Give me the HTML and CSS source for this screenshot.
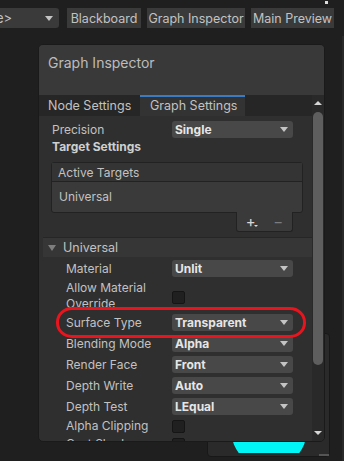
FILE: index.html
```html
<!DOCTYPE html>
<html lang="en">
<head>
    <meta charset="UTF-8">
    <title>Graph Inspector</title>
    <link rel="stylesheet" href="styles.css">
</head>
<body>

    <!-- Barre d'outils -->
    <div class="toolbar">
        <div class="tool-dropdown"><span>e&gt;</span><i class="arrow"></i></div>
        <button class="tool-btn btn-blackboard">Blackboard</button>
        <button class="tool-btn btn-inspector">Graph Inspector</button>
        <button class="tool-btn btn-preview">Main Preview</button>
        <span class="tool-dot"></span>
    </div>
    <div class="edge-line"></div>

    <!-- Fenêtre Main Preview (derrière) -->
    <div class="preview-window">
        <div class="preview-view">
            <div class="preview-sphere"></div>
        </div>
        <i class="resize-handle"></i>
    </div>

    <!-- Fenêtre Graph Inspector -->
    <div class="inspector">
        <div class="inspector-title">Graph Inspector</div>

        <div class="inspector-body">
            <div class="main">
                <div class="tabs">
                    <div class="tab">Node Settings</div>
                    <div class="tab active">Graph Settings</div>
                </div>

                <div class="content">
                    <div class="row">
                        <span class="label">Precision</span>
                        <div class="popup">Single<i class="arrow"></i></div>
                    </div>
                    <div class="section-title">Target Settings</div>

                    <div class="target-list">
                        <div class="target-header">Active Targets</div>
                        <div class="target-item">Universal</div>
                    </div>
                    <div class="target-footer">
                        <span class="plus">+<i class="mini-arrow"></i></span>
                        <span class="minus">&minus;</span>
                    </div>

                    <div class="foldout"><i class="fold-arrow"></i>Universal</div>

                    <div class="row sub">
                        <span class="label">Material</span>
                        <div class="popup">Unlit<i class="arrow"></i></div>
                    </div>
                    <div class="row sub tall">
                        <span class="label">Allow Material<br>Override</span>
                        <div class="checkbox"></div>
                    </div>
                    <div class="row sub">
                        <span class="label">Surface Type</span>
                        <div class="popup">Transparent<i class="arrow"></i></div>
                    </div>
                    <div class="row sub">
                        <span class="label">Blending Mode</span>
                        <div class="popup">Alpha<i class="arrow"></i></div>
                    </div>
                    <div class="row sub">
                        <span class="label">Render Face</span>
                        <div class="popup">Front<i class="arrow"></i></div>
                    </div>
                    <div class="row sub">
                        <span class="label">Depth Write</span>
                        <div class="popup">Auto<i class="arrow"></i></div>
                    </div>
                    <div class="row sub">
                        <span class="label">Depth Test</span>
                        <div class="popup">LEqual<i class="arrow"></i></div>
                    </div>
                    <div class="row sub short">
                        <span class="label">Alpha Clipping</span>
                        <div class="checkbox"></div>
                    </div>
                    <div class="row sub short">
                        <span class="label">Cast Shadows</span>
                        <div class="checkbox"></div>
                    </div>
                </div>
            </div>

            <div class="scrollbar">
                <i class="scroll-up"></i>
                <div class="scroll-track"><div class="scroll-thumb"></div></div>
                <i class="scroll-down"></i>
            </div>
        </div>
    </div>

    <!-- Annotation rouge -->
    <div class="highlight"></div>

</body>
</html>
```

FILE: styles.css
```css
/* Couleurs du thème sombre */
:root {
    --bg: #1f1f1f;
    --panel: #2f2f2f;
    --header: #393939;
    --text: #c2c2c2;
    --value: #e6e6e6;
    --popup: #484848;
    --border: #1a1a1a;
}

* {
    box-sizing: border-box;
    margin: 0;
    padding: 0;
}

body {
    width: 344px;
    height: 461px;
    overflow: hidden;
    position: relative;
    background: var(--bg);
    font-family: 'Inter', 'Liberation Sans', sans-serif;
    font-size: 12px;
    color: var(--text);
}

/* Toolbar */
.toolbar {
    display: flex;
    align-items: center;
    height: 28px;
    padding-top: 8px;
    gap: 4px;
}

.tool-dropdown {
    width: 59px;
    height: 20px;
    background: #3a3a3a;
    border-radius: 0 3px 3px 0;
    display: flex;
    align-items: center;
    justify-content: space-between;
    padding-right: 6px;
    margin-right: 4px;
    font-size: 13px;
}

.tool-dropdown span {
    margin-left: -4px;
}

.tool-btn {
    height: 20px;
    border: none;
    background: #3a3a3a;
    color: var(--text);
    font-family: inherit;
    font-size: 12.5px;
    padding: 0;
}

.btn-blackboard { width: 74px; }
.btn-inspector { width: 98px; margin-left: 2px; }
.btn-preview { width: 83px; margin-left: 2px; }

.tool-dot {
    position: absolute;
    top: 1px;
    left: 325px;
    width: 3px;
    height: 3px;
    background: #ddd;
}

.edge-line {
    position: absolute;
    left: 342px;
    top: 36px;
    width: 2px;
    height: 425px;
    background: #292929;
}

.arrow {
    width: 0;
    height: 0;
    border-left: 4px solid transparent;
    border-right: 4px solid transparent;
    border-top: 5px solid #c4c4c4;
}

/* Fenêtre preview */
.preview-window {
    position: absolute;
    left: 207px;
    top: 333px;
    width: 123px;
    height: 124px;
    background: #2a2a2a;
    border: 1px solid #181818;
    border-radius: 4px;
    padding-bottom: 3px;
}

.preview-view {
    position: relative;
    height: 100%;
    overflow: hidden;
}

.preview-sphere {
    position: absolute;
    left: 23px;
    top: 58px;
    width: 76px;
    height: 76px;
    border-radius: 50%;
    background: #00f6f6;
}

.resize-handle {
    position: absolute;
    right: 0;
    bottom: 0;
    width: 10px;
    height: 2px;
    background: #555;
}

/* Fenêtre inspector */
.inspector {
    position: absolute;
    left: 38px;
    top: 44px;
    width: 287px;
    height: 398px;
    background: var(--panel);
    border: 1px solid var(--border);
    border-radius: 5px;
    overflow: hidden;
    display: flex;
    flex-direction: column;
}

.inspector-title {
    height: 50px;
    background: var(--header);
    font-size: 14px;
    padding: 9px 0 0 9px;
    color: #bcbcbc;
}

.inspector-body {
    flex: 1;
    display: flex;
    min-height: 0;
}

.main {
    flex: 1;
    display: flex;
    flex-direction: column;
    min-width: 0;
}

.tabs {
    display: flex;
    height: 21px;
    background: #262626;
}

.tab {
    width: 101px;
    padding: 3px 0 0 9px;
    font-size: 12.5px;
}

.tab.active {
    width: 105px;
    background: #333333;
    border-top: 2px solid #3b7bc4;
    padding: 1px 0 0 10px;
}

.content {
    flex: 1;
    padding-top: 5px;
    overflow: hidden;
}

.row {
    display: flex;
    align-items: center;
    height: 17px;
    margin-bottom: 4px;
}

.label {
    width: 133px;
    padding-left: 13px;
    line-height: 16px;
    flex-shrink: 0;
}

.row.sub .label {
    padding-left: 27px;
}

.row.tall {
    height: 30px;
    margin-bottom: 3px;
}

.row.tall .checkbox {
    margin-top: 2px;
}

.row.short {
    height: 14px;
    margin-bottom: 4px;
}

.popup {
    width: 121px;
    height: 17px;
    background: var(--popup);
    border-radius: 3px;
    color: var(--value);
    font-weight: 700;
    font-size: 12px;
    display: flex;
    align-items: center;
    justify-content: space-between;
    padding: 0 5px 0 3px;
}

.checkbox {
    width: 13px;
    height: 13px;
    background: #202020;
    border: 1px solid #151515;
    border-radius: 2px;
}

.section-title {
    font-weight: 700;
    padding-left: 13px;
    height: 16px;
    line-height: 10px;
    color: #cfcfcf;
}

/* Liste des cibles */
.target-list {
    margin: 4px 9px 0 12px;
    border: 1px solid #222;
    border-radius: 3px;
    background: #3a3a3a;
}

.target-header {
    height: 19px;
    background: #343434;
    border-bottom: 1px solid #222;
    padding: 2px 0 0 6px;
}

.target-item {
    height: 30px;
    padding: 7px 0 0 7px;
}

.target-footer {
    margin: -1px 19px 0 auto;
    width: 57px;
    height: 20px;
    background: #3a3a3a;
    border: 1px solid #222;
    border-top: none;
    border-radius: 0 0 3px 3px;
    display: flex;
    align-items: center;
    justify-content: space-around;
    font-size: 15px;
}

.plus {
    color: #d8d8d8;
    position: relative;
}

.mini-arrow {
    position: absolute;
    left: 8px;
    top: 13px;
    width: 0;
    height: 0;
    border-left: 2px solid transparent;
    border-right: 2px solid transparent;
    border-top: 2px solid #d8d8d8;
}

.minus {
    color: #7c7c7c;
}

.foldout {
    margin: 5px 0 3px 4px;
    height: 20px;
    background: #363636;
    border-top: 1px solid #262626;
    display: flex;
    align-items: center;
    gap: 7px;
    padding-left: 5px;
    font-size: 12.5px;
}

.fold-arrow {
    width: 0;
    height: 0;
    border-left: 4px solid transparent;
    border-right: 4px solid transparent;
    border-top: 6px solid #7e7e7e;
}

/* Scrollbar */
.scrollbar {
    width: 12px;
    background: #292929;
    display: flex;
    flex-direction: column;
    align-items: center;
    padding: 6px 0 6px;
}

.scroll-up,
.scroll-down {
    width: 0;
    height: 0;
    border-left: 4px solid transparent;
    border-right: 4px solid transparent;
}

.scroll-up { border-bottom: 4px solid #d6d6d6; }
.scroll-down { border-top: 4px solid #d6d6d6; }

.scroll-track {
    flex: 1;
    width: 100%;
    padding: 7px 1px 0 1px;
}

.scroll-thumb {
    height: 253px;
    background: #5e5e5e;
    border-radius: 5px;
}

/* Annotation */
.highlight {
    position: absolute;
    left: 56px;
    top: 307px;
    width: 250px;
    height: 31px;
    border: 3px solid #e8141e;
    border-radius: 16px / 15px;
}
```
